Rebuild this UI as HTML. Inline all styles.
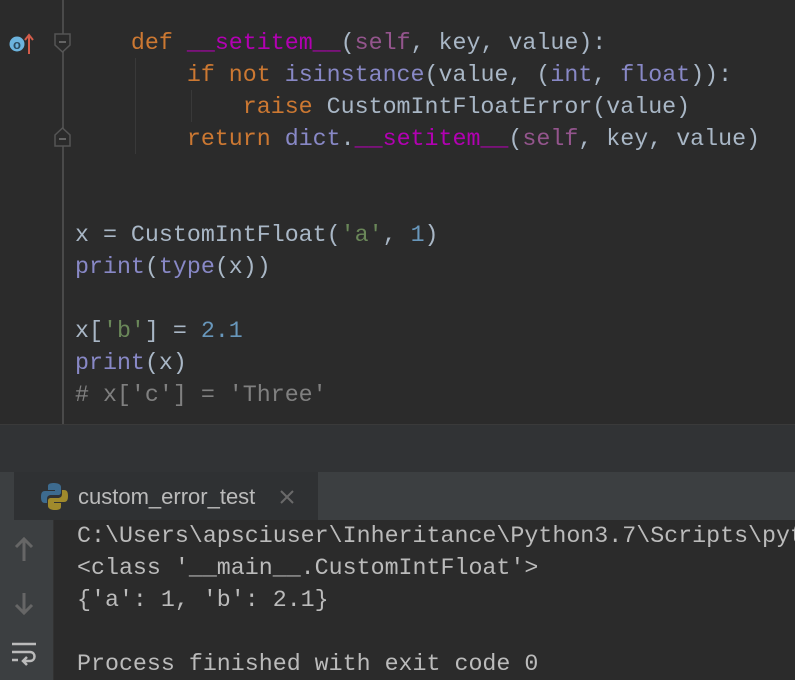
<!DOCTYPE html>
<html><head><style>
body{margin:0;width:795px;height:680px;overflow:hidden;background:#2b2b2b;position:relative;font-family:"Liberation Mono",monospace}
.a{position:absolute}
.code{position:absolute;left:75px;top:27px;font-size:23.3px;line-height:32px;color:#a9b7c6;white-space:pre}
.k{color:#cc7832}.m{color:#b200b2}.s{color:#94558d}.b{color:#8888c6}.st{color:#6a8759}.n{color:#6897bb}.c{color:#808080}
.con{position:absolute;left:77px;top:520px;width:718px;overflow:hidden;font-size:23.3px;line-height:32px;color:#bbbbbb;white-space:pre}
</style></head><body>
<div class="a" style="left:135px;top:58px;width:1px;height:96px;background:#393939"></div>
<div class="a" style="left:191px;top:90px;width:1px;height:32px;background:#393939"></div>
<div class="code">    <span class="k">def</span> <span class="m">__setitem__</span>(<span class="s">self</span>, key, value):
        <span class="k">if not</span> <span class="b">isinstance</span>(value, (<span class="b">int</span>, <span class="b">float</span>)):
            <span class="k">raise</span> CustomIntFloatError(value)
        <span class="k">return</span> <span class="b">dict</span>.<span class="m">__setitem__</span>(<span class="s">self</span>, key, value)


x = CustomIntFloat(<span class="st">'a'</span>, <span class="n">1</span>)
<span class="b">print</span>(<span class="b">type</span>(x))

x[<span class="st">'b'</span>] = <span class="n">2.1</span>
<span class="b">print</span>(x)
<span class="c"># x['c'] = 'Three'</span></div>
<svg class="a" style="left:0;top:0" width="75" height="424">
<rect x="62" y="0" width="2" height="424" fill="#4a4a4a"/>
<circle cx="17" cy="44" r="7.5" fill="#6cb3dd"/><text x="17" y="49" font-size="13" text-anchor="middle" fill="#2b4a5e" font-family="Liberation Sans" font-weight="bold">o</text>
<path d="M29 54V35M25 40l4-5 4 5" stroke="#d35c4a" stroke-width="2" fill="none"/>
<path d="M55 34h15v11l-7.5 7-7.5-7z" fill="#2b2b2b" stroke="#555" stroke-width="1.5"/><path d="M59 42h7" stroke="#777" stroke-width="1.5"/>
<path d="M55 135l7.5-7 7.5 7v11h-15z" fill="#2b2b2b" stroke="#555" stroke-width="1.5"/><path d="M59 139h7" stroke="#777" stroke-width="1.5"/>
</svg>
<div class="a" style="left:0;top:424px;width:795px;height:48px;background:#313335;border-top:1px solid #3a3a3a"></div>
<div class="a" style="left:0;top:472px;width:795px;height:48px;background:#3c3f41"></div>
<div class="a" style="left:14px;top:472px;width:304px;height:48px;background:#2f3133"></div>
<svg class="a" style="left:40px;top:482px" width="30" height="30">
<path d="M14 1c-6 0-6 2-6 4v3h7v1H5c-3 0-4 2-4 6s1 6 4 6h2v-4c0-3 2-4 4-4h7c2 0 3-1 3-3V5c0-2-2-4-7-4z" fill="#3d6b8f"/>
<path d="M15 28c6 0 6-2 6-4v-3h-7v-1h10c3 0 4-2 4-6s-1-6-4-6h-2v4c0 3-2 4-4 4h-7c-2 0-3 1-3 3v5c0 2 2 4 7 4z" fill="#a08a2c"/>
</svg>
<div class="a" style="left:78px;top:484px;font-family:'Liberation Sans',sans-serif;font-size:22px;color:#bbbbbb">custom_error_test</div>
<svg class="a" style="left:279px;top:489px" width="16" height="16"><path d="M2 2l12 12M14 2L2 14" stroke="#6a6a6a" stroke-width="2"/></svg>
<div class="a" style="left:0;top:520px;width:53px;height:160px;background:#3c3f41;border-right:1px solid #323232"></div>
<svg class="a" style="left:10px;top:535px" width="30" height="145">
<path d="M14 4v22M6 12l8-8 8 8" stroke="#666" stroke-width="3" fill="none"/>
<path d="M14 58v20M6 70l8 8 8-8" stroke="#666" stroke-width="3" fill="none"/>
<path d="M2 109h24M2 117h18c6 0 6 9 0 9h-6M17 122l-4 4 4 4M2 125h6" stroke="#bbb" stroke-width="2.5" fill="none"/>
</svg>
<div class="con">C:\Users\apsciuser\Inheritance\Python3.7\Scripts\python.exe
&lt;class '__main__.CustomIntFloat'&gt;
{'a': 1, 'b': 2.1}

Process finished with exit code 0</div>
</body></html>
